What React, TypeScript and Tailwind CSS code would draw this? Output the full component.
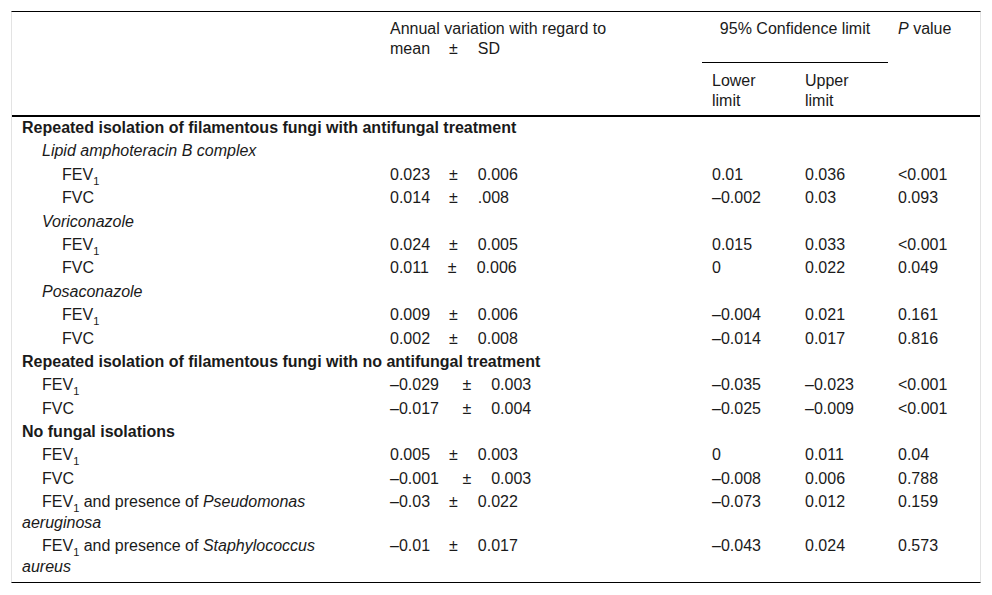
import type { ReactNode } from "react";

type Fila = {
  label: ReactNode;
  nivel: 0 | 1 | 2;
  grupo?: boolean;
  media?: [string, string];
  ancho?: boolean;
  lower?: string;
  upper?: string;
  p?: string;
};

const Fev = () => (
  <>
    FEV<sub className="text-[11px] -bottom-[5px]">1</sub>
  </>
);

const FILAS: Fila[] = [
  { label: "Repeated isolation of filamentous fungi with antifungal treatment", nivel: 0, grupo: true },
  { label: <i>Lipid amphoteracin B complex</i>, nivel: 1 },
  { label: <Fev />, nivel: 2, media: ["0.023", "0.006"], lower: "0.01", upper: "0.036", p: "<0.001" },
  { label: "FVC", nivel: 2, media: ["0.014", ".008"], lower: "–0.002", upper: "0.03", p: "0.093" },
  { label: <i>Voriconazole</i>, nivel: 1 },
  { label: <Fev />, nivel: 2, media: ["0.024", "0.005"], lower: "0.015", upper: "0.033", p: "<0.001" },
  { label: "FVC", nivel: 2, media: ["0.011", "0.006"], lower: "0", upper: "0.022", p: "0.049" },
  { label: <i>Posaconazole</i>, nivel: 1 },
  { label: <Fev />, nivel: 2, media: ["0.009", "0.006"], lower: "–0.004", upper: "0.021", p: "0.161" },
  { label: "FVC", nivel: 2, media: ["0.002", "0.008"], lower: "–0.014", upper: "0.017", p: "0.816" },
  { label: "Repeated isolation of filamentous fungi with no antifungal treatment", nivel: 0, grupo: true },
  { label: <Fev />, nivel: 1, media: ["–0.029", "0.003"], ancho: true, lower: "–0.035", upper: "–0.023", p: "<0.001" },
  { label: "FVC", nivel: 1, media: ["–0.017", "0.004"], ancho: true, lower: "–0.025", upper: "–0.009", p: "<0.001" },
  { label: "No fungal isolations", nivel: 0, grupo: true },
  { label: <Fev />, nivel: 1, media: ["0.005", "0.003"], lower: "0", upper: "0.011", p: "0.04" },
  { label: "FVC", nivel: 1, media: ["–0.001", "0.003"], ancho: true, lower: "–0.008", upper: "0.006", p: "0.788" },
  {
    label: (
      <>
        <Fev /> and presence of <i>Pseudomonas aeruginosa</i>
      </>
    ),
    nivel: 1,
    media: ["–0.03", "0.022"],
    lower: "–0.073",
    upper: "0.012",
    p: "0.159",
  },
  {
    label: (
      <>
        <Fev /> and presence of <i>Staphylococcus aureus</i>
      </>
    ),
    nivel: 1,
    media: ["–0.01", "0.017"],
    lower: "–0.043",
    upper: "0.024",
    p: "0.573",
  },
];

const SANGRIA = ["indent-0", "indent-5", "indent-10"];

function Media({ a, b, ancho }: { a: string; b: string; ancho?: boolean }) {
  return (
    <>
      {a}
      <span className={ancho ? "inline-block w-[23.5px]" : "inline-block w-[19px]"} />±
      <span className="inline-block w-[20px]" />
      {b}
    </>
  );
}

export default function App() {
  const celda = "px-[10px] pt-[1.5px] pb-[1.4px] align-top leading-[20.5px]";
  return (
    <div className="min-h-[595px] bg-white pt-[11px] pl-[11px] [font-family:'Liberation_Sans',Arial,sans-serif] text-[16px] text-[#1a1a1a]">
      <div className="w-[970px] border-x border-[#e3e3e3] border-t border-t-black border-b border-b-black">
        <table className="w-[968px] table-fixed border-collapse">
          <colgroup>
            <col className="w-[368px]" />
            <col className="w-[322px]" />
            <col className="w-[93px]" />
            <col className="w-[93px]" />
            <col className="w-[92px]" />
          </colgroup>
          <thead className="border-b-2 border-black">
            <tr>
              <th rowSpan={2} />
              <th className="px-[10px] pt-[6.5px] pb-[2.5px] text-left align-top font-normal leading-[20.5px]">
                Annual variation with regard to
                <br />
                mean
                <span className="inline-block w-[19px]" />±
                <span className="inline-block w-[20px]" />
                SD
              </th>
              <th
                colSpan={2}
                className="border-b border-black px-[10px] pt-[6.5px] pb-[2.5px] text-center align-top font-normal leading-[20.5px]"
              >
                95% Confidence limit
              </th>
              <th
                rowSpan={2}
                className="px-[10px] pt-[6.5px] text-left align-top font-normal leading-[20.5px]"
              >
                <i>P</i> value
              </th>
            </tr>
            <tr>
              <th />
              <th className="px-[10px] pt-[8px] pb-[4px] text-left align-top font-normal leading-[20px]">
                Lower
                <br />
                limit
              </th>
              <th className="px-[10px] pt-[8px] pb-[4px] text-left align-top font-normal leading-[20px]">
                Upper
                <br />
                limit
              </th>
            </tr>
          </thead>
          <tbody>
            {FILAS.map((f, i) => (
              <tr key={i}>
                <td
                  colSpan={f.grupo ? 5 : 1}
                  className={`${celda} ${SANGRIA[f.nivel]} ${f.grupo ? "font-bold" : "pr-[22px]"} ${
                    i === FILAS.length - 1 ? "pb-[5px]" : ""
                  }`}
                >
                  {f.label}
                </td>
                {!f.grupo && (
                  <>
                    <td className={celda}>
                      {f.media && <Media a={f.media[0]} b={f.media[1]} ancho={f.ancho} />}
                    </td>
                    <td className={celda}>{f.lower}</td>
                    <td className={celda}>{f.upper}</td>
                    <td className={celda}>{f.p}</td>
                  </>
                )}
              </tr>
            ))}
          </tbody>
        </table>
      </div>
    </div>
  );
}
